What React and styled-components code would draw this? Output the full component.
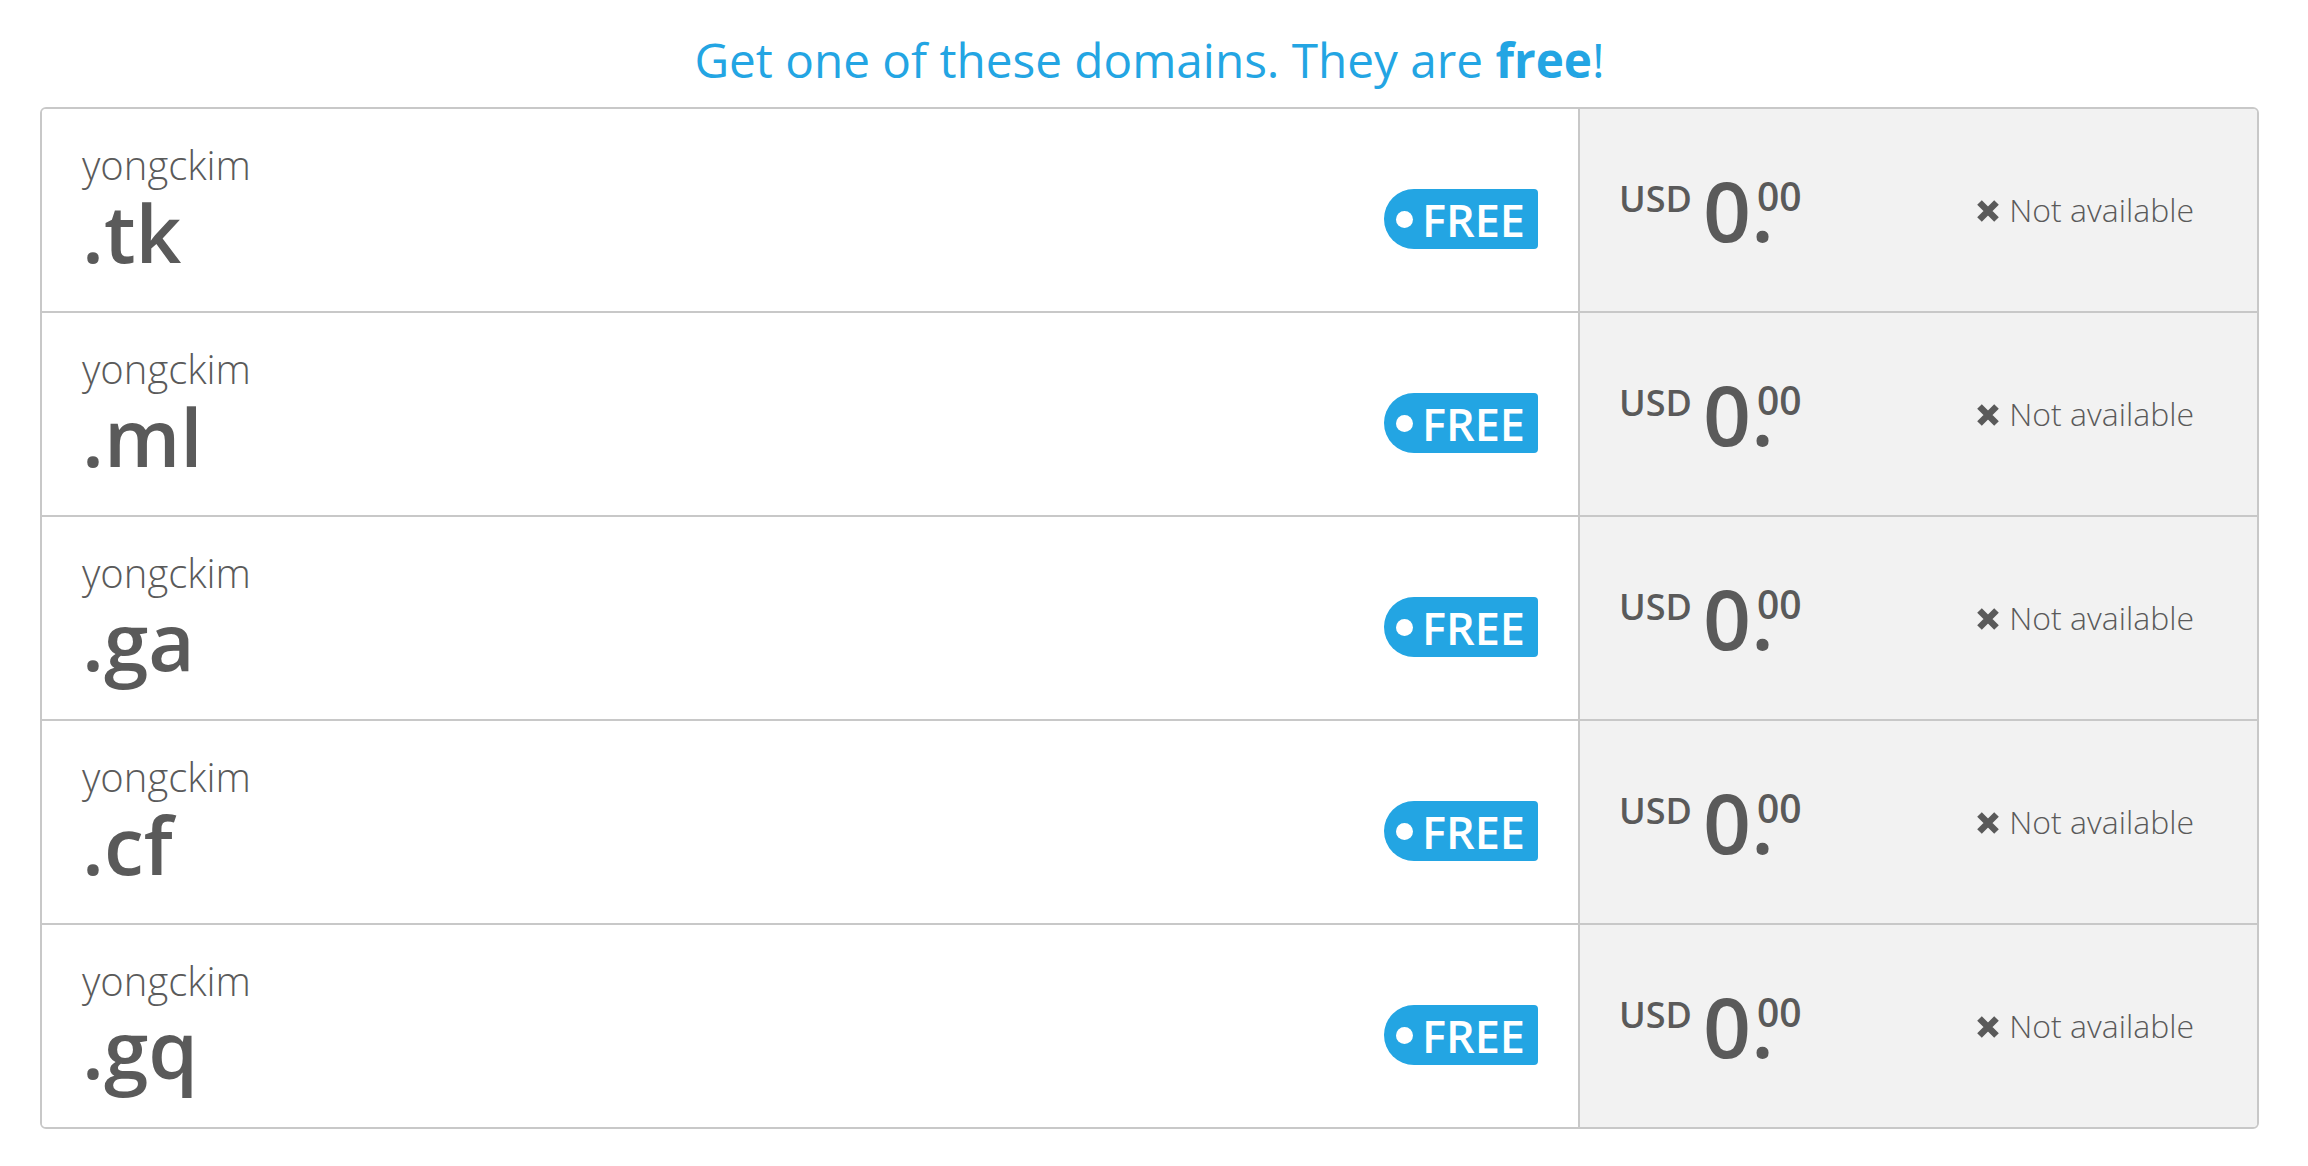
import React from 'react';
import styled, { createGlobalStyle } from 'styled-components';

const GlobalStyle = createGlobalStyle`
  html, body { margin: 0; padding: 0; background: #ffffff; }
  body {
    font-family: "Open Sans", "Liberation Sans", sans-serif;
    color: #5a5a5a;
  }
`;

const Page = styled.div`
  width: 2219px;
  margin-left: 40px;
  padding-top: 27px;
`;

const Title = styled.h2`
  margin: 0 0 15px;
  text-align: center;
  font-size: 47.7px;
  line-height: 65px;
  font-weight: 400;
  color: #23a5e3;
  strong { font-weight: 700; }
`;

const Table = styled.div`
  border: 2px solid #c8c8c8;
  border-radius: 6px;
  overflow: hidden;
`;

const Row = styled.div`
  display: grid;
  grid-template-columns: 1538px 1fr;
  height: 202px;
  & + & { border-top: 2px solid #c8c8c8; }
`;

const DomainCell = styled.div`
  display: flex;
  align-items: center;
  justify-content: space-between;
  padding: 0 40px 0 40px;
  border-right: 2px solid #c8c8c8;
  background: #ffffff;
`;

const NameBlock = styled.div`
  display: flex;
  flex-direction: column;
  padding-bottom: 6px;
`;

const Name = styled.div`
  font-size: 40px;
  line-height: 44px;
  font-weight: 300;
`;

const Tld = styled.div`
  margin-top: 5px;
  font-size: 80px;
  line-height: 80px;
  font-weight: 600;
`;

const Badge = styled.div`
  display: inline-flex;
  align-items: center;
  gap: 9px;
  height: 60px;
  margin-top: 18px;
  padding: 0 13px 0 12px;
  border-radius: 30px 4px 4px 30px;
  background: #23a5e3;
  color: #ffffff;
  font-size: 45px;
  line-height: 1;
  font-weight: 600;
`;

const Dot = styled.span`
  width: 17px;
  height: 17px;
  border-radius: 50%;
  background: #ffffff;
`;

const PriceCell = styled.div`
  display: flex;
  align-items: center;
  justify-content: space-between;
  padding: 0 63px 0 39px;
  background: #f2f2f2;
`;

const Price = styled.div`
  display: flex;
  align-items: flex-start;
  font-weight: 600;
  line-height: 1;
`;

const Currency = styled.span`
  margin-top: 13px;
  margin-right: 11px;
  font-size: 36px;
`;

const Amount = styled.span`
  font-size: 84px;
`;

const Cents = styled.span`
  margin-top: 8px;
  margin-left: -17px;
  font-size: 39px;
`;

const Status = styled.div`
  display: flex;
  align-items: center;
  gap: 9px;
  font-size: 32px;
  line-height: 1;
  font-weight: 300;
`;

const CrossIcon = styled.svg`
  width: 24px;
  height: 24px;
  flex: none;
  margin-top: 2px;
`;

const Cross = () => (
  <CrossIcon viewBox="0 0 24 24" aria-hidden="true">
    <path
      d="M3.5 3.5 L20.5 20.5 M20.5 3.5 L3.5 20.5"
      stroke="#5a5a5a"
      strokeWidth="6.5"
      strokeLinecap="butt"
      fill="none"
    />
  </CrossIcon>
);

const tlds = ['.tk', '.ml', '.ga', '.cf', '.gq'];

export default function App() {
  return (
    <>
      <GlobalStyle />
      <Page>
        <Title>
          Get one of these domains. They are <strong>free</strong>!
        </Title>
        <Table>
          {tlds.map((tld) => (
            <Row key={tld}>
              <DomainCell>
                <NameBlock>
                  <Name>yongckim</Name>
                  <Tld>{tld}</Tld>
                </NameBlock>
                <Badge>
                  <Dot />
                  FREE
                </Badge>
              </DomainCell>
              <PriceCell>
                <Price>
                  <Currency>USD</Currency>
                  <Amount>0</Amount>
                  <Amount>.</Amount>
                  <Cents>00</Cents>
                </Price>
                <Status>
                  <Cross />
                  Not available
                </Status>
              </PriceCell>
            </Row>
          ))}
        </Table>
      </Page>
    </>
  );
}
